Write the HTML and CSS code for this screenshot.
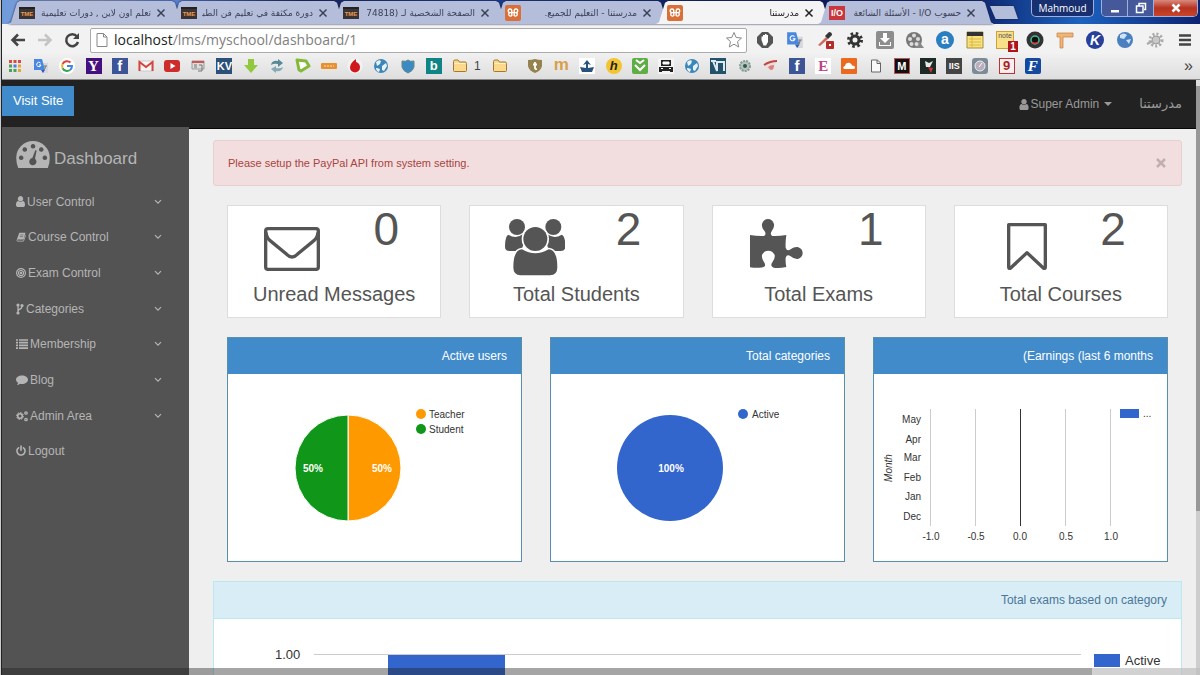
FILE: index.html
```html
<!DOCTYPE html>
<html lang="en">

<head>
    <meta charset="UTF-8">
    <meta name="viewport" content="width=device-width, initial-scale=1.0">
    <title>مدرستنا</title>
    <link rel="stylesheet" href="styles.css">
</head>
<body>
    <svg class="sprite" aria-hidden="true">
        <symbol id="close" viewBox="0 0 10 10"><path d="M1.5 1.5l7 7m0-7l-7 7" stroke="currentColor" stroke-width="1.5" fill="none"/></symbol>
        <symbol id="chevron" viewBox="0 0 8 6"><path d="M1 1.2l3 3 3-3" stroke="currentColor" stroke-width="1.2" fill="none"/></symbol>
        <symbol id="xampp" viewBox="0 0 16 16"><rect width="16" height="16" rx="2" fill="#d9703a"/><path d="M5 4a1.800 1.800 0 1 0 0 3.600h6a1.800 1.800 0 1 0-1.800-2v5a1.800 1.800 0 1 0 1.800-3H5a1.800 1.800 0 1 0 1.800 3v-5A1.800 1.800 0 0 0 5 4z" stroke="#fff" stroke-width="1.400" fill="none"/></symbol>
        <symbol id="user" viewBox="256 128 1280 1536"><path fill="currentColor" d="M1536 1399q0 109-62.5 187t-150.5 78h-854q-88 0-150.5-78t-62.5-187q0-85 8.5-160.5t31.5-152 58.5-131 94-89 134.5-34.5q131 128 313 128t313-128q76 0 134.5 34.5t94 89 58.5 131 31.5 152 8.5 160.5zm-256-887q0 159-112.5 271.5t-271.5 112.5-271.5-112.5-112.5-271.5 112.5-271.5 271.5-112.5 271.5 112.5 112.5 271.5z"/></symbol>
        <symbol id="folder" viewBox="0 0 16 16"><path d="M1.5 3.5q0-1.500 1.500-1.500h3l1.500 2h5.500q1.500 0 1.500 1.500v7q0 1-1 1h-11q-1 0-1-1z" fill="#fbd98c" stroke="#a8772c"/><path d="M2.500 5.500h11" stroke="#fff1c4"/></symbol>
        <symbol id="translate" viewBox="0 0 16 16"><path d="M6 5h9v10H9z" fill="#d5d8dc"/><path d="M1 1h8l3 11H1z" fill="#4a87e0"/><path d="M8 12h4l-2 3z" fill="#2c5fb5"/><path d="M7.500 5a2.200 2.200 0 1 0 .5 2H6" stroke="#fff" fill="none"/><path d="M11 8h3m-1.500 0q0 3-2 4" stroke="#777" fill="none"/></symbol>
        <symbol id="globe" viewBox="0 0 16 16"><circle cx="8" cy="8" r="7" fill="#3c86b8"/><path d="M3 4q3-3 5-1l-1 3-3 2zm6 4l4-3 1 3-3 5-2-1zM4 10l3 1-1 3q-3-1-3-4z" fill="#e6f2f6"/></symbol>
    </svg>

    <div class="window">
        <div class="tabstrip">
            <div class="tabs">
                <div class="tab"><span class="tme">TME</span><span class="title" dir="rtl">تعلم اون لاين , دورات تعليمية</span><button aria-label="Close tab"><svg><use href="#close"/></svg></button></div>
                <div class="tab"><span class="tme">TME</span><span class="title" dir="rtl">دورة مكثفة في تعليم فن الطبا</span><button aria-label="Close tab"><svg><use href="#close"/></svg></button></div>
                <div class="tab"><span class="tme">TME</span><span class="title" dir="rtl">الصفحة الشخصية لـ (74818</span><button aria-label="Close tab"><svg><use href="#close"/></svg></button></div>
                <div class="tab"><svg class="ico"><use href="#xampp"/></svg><span class="title" dir="rtl">مدرستنا - التعليم للجميع.</span><button aria-label="Close tab"><svg><use href="#close"/></svg></button></div>
                <div class="tab active"><svg class="ico"><use href="#xampp"/></svg><span class="title" dir="rtl">مدرستنا</span><button aria-label="Close tab"><svg><use href="#close"/></svg></button></div>
                <div class="tab"><span class="io">I/O</span><span class="title" dir="rtl">حسوب I/O - الأسئلة الشائعة</span><button aria-label="Close tab"><svg><use href="#close"/></svg></button></div>
                <button class="newtab" aria-label="New tab"></button>
            </div>
            <div class="controls">
                <button class="profile">Mahmoud</button>
                <div class="winbtns">
                    <button aria-label="Minimize"><svg viewBox="0 0 12 12"><path d="M2 8h8v2.500H2z" fill="#fff"/></svg></button>
                    <button aria-label="Restore"><svg viewBox="0 0 12 12"><path d="M4 3.500V1.500h6.500v6H9M1.500 4h6.500v6.500H1.500z" stroke="#fff" stroke-width="1.500" fill="none"/></svg></button>
                    <button class="exit" aria-label="Close"><svg viewBox="0 0 12 12"><path d="M2.500 2.500l7 7m0-7l-7 7" stroke="#fff" stroke-width="2.500"/></svg></button>
                </div>
            </div>
        </div>

        <div class="toolbar">
            <button aria-label="Back"><svg viewBox="0 0 18 18"><path d="M16 9H3m6-5.500L3.500 9 9 14.500" stroke="#444" stroke-width="2.500" fill="none"/></svg></button>
            <button aria-label="Forward"><svg viewBox="0 0 18 18"><path d="M2 9h13M9 3.500L14.500 9 9 14.500" stroke="#c4c4c4" stroke-width="2.500" fill="none"/></svg></button>
            <button aria-label="Reload"><svg viewBox="0 0 18 18"><path d="M14 5.500A6 6 0 1 0 15 11" stroke="#444" stroke-width="2.500" fill="none"/><path d="M16 2v6h-6z" fill="#444"/></svg></button>
            <div class="omnibox">
                <svg class="ico" viewBox="0 0 16 16"><path d="M3 1.500h6.500l3.500 3.500v9.500H3zM9.500 1.500V5H13" stroke="#888" fill="#fff"/></svg>
                <span class="url"><b>localhost</b>/lms/myschool/dashboard/1</span>
                <button aria-label="Bookmark this page"><svg viewBox="0 0 18 18"><path d="M9 1.500l2.200 5 5.300.5-4 3.600 1.200 5.400L9 13.200 4.300 16l1.200-5.400-4-3.600 5.300-.5z" stroke="#888" fill="#fff"/></svg></button>
            </div>
            <div class="extensions">
                <svg viewBox="0 0 18 18"><path d="M6 1h6l5 5v6l-5 5H6l-5-5V6z" fill="#555"/><path d="M5.500 9V5.500h1.500V4h2V3h1.500v1H12v7l-2 3.500H7.500z" fill="#fff"/></svg>
                <svg><use href="#translate"/></svg>
                <svg viewBox="0 0 18 18"><path d="M2 14l8-8 2 2-8 7z" fill="#c96a60"/><path d="M9 5l4-4q3 0 3 3l-4 4z" fill="#333"/><rect x="10" y="10" width="8" height="8" rx="1" fill="#b52c2a"/><path d="M13 13h2v2h-2z" fill="#fff"/></svg>
                <svg viewBox="0 0 18 18"><circle cx="9" cy="9" r="6.500" stroke="#333" stroke-width="3" stroke-dasharray="2.500 2.600" fill="none"/><circle cx="9" cy="9" r="4" stroke="#333" stroke-width="3" fill="none"/></svg>
                <svg viewBox="0 0 18 18"><rect width="18" height="18" rx="2" fill="#8d8d8d"/><path d="M7 2h4v5h3l-5 5-5-5h3zM3 11v4h12v-4h-1v3H4v-3z" fill="#fff"/></svg>
                <svg viewBox="0 0 18 18"><circle cx="8" cy="9" r="8" fill="#777"/><path d="M13 10l5 7h-9z" fill="#888"/><g fill="#ddd"><circle cx="8" cy="4.500" r="2"/><circle cx="4" cy="8" r="2"/><circle cx="12" cy="8" r="2"/><circle cx="5.500" cy="13" r="2"/><circle cx="10.500" cy="13" r="2"/></g></svg>
                <span class="badge round a">a</span>
                <svg viewBox="0 0 18 18"><path d="M1 1h16v16H1z" fill="#f7e27c" stroke="#a58f3a"/><path d="M1 1h16v4H1z" fill="#333"/><path d="M3 8h12M3 11h12M3 14h12M6 5v12" stroke="#d9b84a"/></svg>
                <span class="note">note<i>1</i></span>
                <svg viewBox="0 0 18 18"><circle cx="9" cy="9" r="8.500" fill="#333"/><circle cx="9" cy="9" r="4" fill="#111" stroke="#4b9" stroke-width="1.500"/><path d="M6 11a4 4 0 0 0 6 0" stroke="#d33" stroke-width="1.500" fill="none"/></svg>
                <svg viewBox="0 0 18 18"><path d="M1 2h16v4H7v11H4V6H1z" fill="#eeb478" stroke="#c9803a" stroke-width=".7"/></svg>
                <span class="badge round k">K</span>
                <svg viewBox="0 0 18 18"><circle cx="9" cy="9" r="8" fill="#4a7fc0"/><path d="M4 4q4-3 7 0l-3 4-4-1zM10 9l5-1-2 5z" fill="#cfe2f6"/></svg>
                <svg viewBox="0 0 18 18"><circle cx="10" cy="9" r="6" stroke="#aaa" stroke-width="3" stroke-dasharray="2 2" fill="none"/><circle cx="10" cy="9" r="4" fill="#c8c8c8" stroke="#999"/><path d="M1 13l6-3" stroke="#aaa" stroke-width="2"/></svg>
                <svg viewBox="0 0 18 18"><path d="M3 4.500h12M3 9h12M3 13.500h12" stroke="#444" stroke-width="2.500"/></svg>
            </div>
        </div>

        <div class="bookmarks">
            <div class="group">
                <svg viewBox="0 0 16 16"><path d="M2 3.500h3m1.500 0h3m1.500 0h3" stroke="#dc4a3d" stroke-width="3"/><path d="M2 8h3" stroke="#4aa350" stroke-width="3"/><path d="M6.500 8h3" stroke="#4383d8" stroke-width="3"/><path d="M11 8h3" stroke="#e8a33d" stroke-width="3"/><path d="M2 12.500h3m1.500 0h3" stroke="#4aa350" stroke-width="3"/><path d="M11 12.500h3" stroke="#e8a33d" stroke-width="3"/></svg>
                <svg><use href="#translate"/></svg>
                <svg viewBox="0 0 16 16"><circle cx="8" cy="8" r="8" fill="#fff"/><g fill="none" stroke-width="2"><path d="M11.500 4.500A5 5 0 0 0 3.600 6" stroke="#e0443a"/><path d="M3.600 6a5 5 0 0 0 0 4.200" stroke="#f0b428"/><path d="M3.600 10.200A5 5 0 0 0 11 12" stroke="#3aa555"/><path d="M11 12a5 5 0 0 0 2-4H8" stroke="#4285e4"/></g></svg>
                <span class="fav serif yahoo">Y</span>
                <span class="fav fb">f</span>
                <svg viewBox="0 0 16 16"><path d="M1 3h14v10H1z" fill="#f6f6f6" stroke="#ccc"/><path d="M1.500 13V4L8 9l6.500-5v9" stroke="#d6453d" stroke-width="2" fill="none"/></svg>
                <svg viewBox="0 0 16 16"><rect y="2" width="16" height="12" rx="3" fill="#cc2f2b"/><path d="M6.500 5v6l5-3z" fill="#fff"/></svg>
                <svg viewBox="0 0 16 16"><path d="M2 3h12v8H2z" fill="#ddd" stroke="#999"/><path d="M2 4h12" stroke="#c55" stroke-width="2"/><path d="M4 7h3m-3 2h3m2-2h3v6H8" stroke="#777" fill="none"/></svg>
                <span class="fav kv">KV</span>
                <svg viewBox="0 0 16 16"><path d="M5 1h6v6h4l-7 8-7-8h4z" fill="#92c83e"/></svg>
                <svg viewBox="0 0 16 16"><path d="M2 7q1-5 7-4V1l5 4-5 4V6Q5 5 2 7z" fill="#58899a"/><path d="M14 9q-1 5-7 4v2l-5-4 5-3v2q4 1 7-1z" fill="#88a9b4"/></svg>
                <svg viewBox="0 0 16 16"><path d="M2 2l9 1 3 5-8 5-2-1z" stroke="#85b93a" stroke-width="3" stroke-linejoin="round" fill="#fff"/></svg>
                <svg viewBox="0 0 16 16"><rect y="5" width="16" height="6" rx="1" fill="#e8902e"/><path d="M3 8h10" stroke="#ffe0b8" stroke-dasharray="2 1"/></svg>
                <svg viewBox="0 0 16 16"><circle cx="8" cy="8" r="7.500" fill="#f3f3f3"/><path d="M9 1q-6 4-6 8.500a5 5 0 0 0 10 0Q13 5 9 4z" fill="#d0181c"/></svg>
                <svg><use href="#globe"/></svg>
                <svg viewBox="0 0 16 16"><path d="M2 3q4 1 6-1 2 2 6 1v6q-1 4-6 6-5-2-6-6z" fill="#3b8ac4" stroke="#688"/></svg>
                <span class="fav bing">b</span>
                <svg><use href="#folder"/></svg>
            </div>
            <div class="folders"><span>1</span><svg><use href="#folder"/></svg></div>
            <div class="group">
                <svg viewBox="0 0 16 16"><path d="M1 2q4 0 7-1 3 1 7 1v6q-1 5-7 7-6-2-7-7z" fill="#95824f"/><path d="M8 4v6q0 1.500 2 1M6 6.500h4" stroke="#fff" stroke-width="1.800" fill="none"/></svg>
                <span class="fav m">m</span>
                <svg viewBox="0 0 16 16"><path d="M0 0h16v16H0z" fill="#fff"/><path d="M1 9l6 1V6l-3 1 4-5 4 5-3-1v4l6-1-2 5H3z" fill="#27527d"/></svg>
                <span class="fav h">h</span>
                <svg viewBox="0 0 16 16"><rect width="16" height="16" rx="2" fill="#5fae45"/><path d="M4 2l4 3 4-3M3 7l5 5 5-5" stroke="#fff" stroke-width="2" fill="none"/></svg>
                <svg viewBox="0 0 16 16"><path d="M0 0h16v16H0z" fill="#f4f4f4"/><path d="M3 2h10v6H3zM1 9h14v5h-3v-1H4v1H1z" fill="#222"/><path d="M5 4h6v2H5zM3 10.500h2m6 0h2" fill="#fff" stroke="#fff"/></svg>
                <svg><use href="#globe"/></svg>
                <svg viewBox="0 0 16 16"><path d="M0 0h16v16H0z" fill="#24526b"/><path d="M1 3h5M3 3l4 10V4h7v9" fill="none" stroke="#dce9ee" stroke-width="2"/></svg>
                <svg viewBox="0 0 16 16"><circle cx="8" cy="8" r="5" fill="#b5c6c0" stroke="#879a93" stroke-dasharray="2 1" stroke-width="2"/><circle cx="8" cy="8" r="2" fill="#37554e"/></svg>
                <svg viewBox="0 0 16 16"><path d="M1 8q6-5 14-5-3 1-3 4 0 6-5 6-2-3-6-5z" fill="#eadcdc"/><path d="M1 7q6-4 13-4" stroke="#c2443f" stroke-width="2" fill="none"/><path d="M5 9q2-2 6-2 0 5-3 5-1 0-3-3z" fill="#d98078"/></svg>
                <span class="fav fb">f</span>
                <span class="fav serif e">E</span>
                <svg viewBox="0 0 16 16"><rect width="16" height="16" rx="1" fill="#ec6a1e"/><path d="M3 11q-2-2 1-3 1-4 5-3 2 1 2 2.500 3 0 3 2 0 1.500-1.500 1.500z" fill="#fff"/></svg>
                <svg viewBox="0 0 16 16"><path d="M3.500 2h6l3 3v9h-9zM9 2v3.500h3.500" stroke="#666" fill="#f8f8f8"/></svg>
                <span class="fav md">M</span>
                <svg viewBox="0 0 16 16"><path d="M0 0h16v16H0z" fill="#1c2b24"/><path d="M5 3l4 2 4-2-3 6H6z" fill="#e9e9e9"/><path d="M8 9l5 1-2 5z" fill="#c33"/></svg>
                <span class="fav iis">IIS</span>
                <svg viewBox="0 0 16 16"><rect width="16" height="16" rx="3" fill="#7d8a98"/><circle cx="8" cy="8" r="5" fill="#b9aebc" stroke="#eee"/><path d="M7 9l3-4" stroke="#fff"/></svg>
                <span class="fav nine">9</span>
                <span class="fav serif tf">F</span>
            </div>
            <span class="more">»</span>
        </div>

        <div class="viewport">
            <div class="page">
                <header class="navbar">
                    <a class="visit" href="#">Visit Site</a>
                    <a class="account" href="#"><svg><use href="#user"/></svg>Super Admin<i class="caret"></i></a>
                    <a class="brand" href="#" dir="rtl">مدرستنا</a>
                </header>
                <div class="layout">
                    <nav class="sidebar">
                        <h1><svg viewBox="0 0 102 82"><path fill="currentColor" fill-rule="evenodd" d="M6 82Q0 68 0 51a51 51 0 0 1 102 0q0 17-6 31zM51 9a7 7 0 1 0 .1 0zM26 19a7 7 0 1 0 .1 0zM76 19a7 7 0 1 0 .1 0zM15 44a7 7 0 1 0 .1 0zM87 44a7 7 0 1 0 .1 0zM58 28l-9 24a11 11 0 1 0 8 2l5-25z"/></svg>Dashboard</h1>
                        <ul>
                            <li><a href="#"><svg class="person"><use href="#user"/></svg>User Control<svg class="chev"><use href="#chevron"/></svg></a></li>
                            <li><a href="#"><svg viewBox="0 0 12 12"><path d="M4 1h7.500L9 9H1z" fill="currentColor"/><path d="M1.500 9q-1 2 .5 2h7L11.500 4" stroke="currentColor" fill="none"/><path d="M5 3.500h4M4.500 5.500h4" stroke="#535353" stroke-width=".7"/></svg>Course Control<svg class="chev"><use href="#chevron"/></svg></a></li>
                            <li><a href="#"><svg viewBox="1 1 10 10"><g fill="none" stroke="currentColor" stroke-width="1.200"><circle cx="6" cy="6" r="4.400"/><circle cx="6" cy="6" r="2.500"/></g><circle cx="6" cy="6" r="1.200" fill="currentColor"/></svg>Exam Control<svg class="chev"><use href="#chevron"/></svg></a></li>
                            <li><a href="#"><svg class="slim" viewBox="0 0 8 12"><path d="M2 2v8M6 2.500Q6 5.500 4 6T2 9" stroke="currentColor" stroke-width="1.300" fill="none"/><g fill="currentColor"><circle cx="2" cy="2" r="1.600"/><circle cx="6" cy="2.500" r="1.600"/><circle cx="2" cy="10" r="1.600"/></g></svg>Categories<svg class="chev"><use href="#chevron"/></svg></a></li>
                            <li><a href="#"><svg class="wide" viewBox="0 0 12 12"><path d="M0 2h2m1 0h9M0 4.700h2m1 0h9M0 7.400h2m1 0h9M0 10.100h2m1 0h9" stroke="currentColor" stroke-width="1.700"/></svg>Membership<svg class="chev"><use href="#chevron"/></svg></a></li>
                            <li><a href="#"><svg class="wide" viewBox="0 0 12 12"><path d="M6 1.500c3.300 0 6 1.900 6 4.200S9.300 10 6 10q-1 0-2-.3-1.500 1.300-3 1.300 1-1 1-2.300Q0 7.500 0 5.700C0 3.400 2.700 1.500 6 1.500z" fill="currentColor"/></svg>Blog<svg class="chev"><use href="#chevron"/></svg></a></li>
                            <li><a href="#"><svg class="wide" viewBox="0 0 12 12"><g fill="none" stroke="currentColor"><circle cx="4" cy="6" r="2.300" stroke-width="1.600"/><circle cx="4" cy="6" r="3.500" stroke-dasharray="1.500 1.200"/><circle cx="10" cy="3" r="1.200" stroke-width="1.300"/><circle cx="10" cy="9.500" r="1.200" stroke-width="1.300"/></g></svg>Admin Area<svg class="chev"><use href="#chevron"/></svg></a></li>
                            <li><a href="#"><svg viewBox="100 0 1592 1792"><path fill="currentColor" d="M1664 896q0 156-61 298t-164 245-245 164-298 61-298-61-245-164-164-245-61-298q0-182 80.5-343t226.5-270q43-32 95.5-25t83.5 50q32 42 24.5 94.500t-49.500 84.500q-98 74-151.500 181t-53.500 228q0 104 40.500 198.500t109.500 163.500 163.500 109.500 198.500 40.500 198.500-40.500 163.500-109.500 109.500-163.500 40.500-198.500q0-121-53.500-228t-151.500-181q-42-32-49.500-84.500t24.500-94.500q31-43 84-50t95 25q146 109 226.500 270t80.500 343zm-640-768v640q0 52-38 90t-90 38-90-38-38-90v-640q0-52 38-90t90-38 90 38 38 90z"/></svg>Logout</a></li>
                        </ul>
                    </nav>

                    <main>
                        <div class="alert">Please setup the PayPal API from system setting.<button aria-label="Dismiss"><svg viewBox="0 0 12 12"><path d="M2 2l8 8m0-8l-8 8" stroke="currentColor" stroke-width="2.500"/></svg></button></div>

                        <div class="stats">
                            <div class="stat">
                                <svg viewBox="132 72 168 171"><rect x="137" y="101" width="158" height="122" rx="7" fill="none" stroke="#555" stroke-width="10"/><path d="M138 112q0 16 16 28l46 38q16 16 32 0l46-38q16-12 16-28" fill="none" stroke="#555" stroke-width="10"/></svg>
                                <strong>0</strong>
                                <p>Unread Messages</p>
                            </div>
                            <div class="stat">
                                <svg viewBox="846 72 180 171"><g fill="#555"><circle cx="882" cy="96" r="24"/><circle cx="991" cy="96" r="24"/><path d="M856 119q-10 4-10 36 0 13 14 13h34l14-36-9-14q-20 16-43 1zM1016 119q11 4 11 36 0 13-14 13h-34l-14-36 9-14q20 16 42 1z"/></g><path d="M897 163q-26 2-26 54 0 24 22 24h88q22 0 22-24 0-52-26-54-40 24-80 0z" fill="#555" stroke="#fff" stroke-width="10" paint-order="stroke"/><circle cx="937" cy="132" r="36" fill="#555" stroke="#fff" stroke-width="10" paint-order="stroke"/></svg>
                                <strong>2</strong>
                                <p>Total Students</p>
                            </div>
                            <div class="stat">
                                <svg viewBox="157 72 158 171"><path fill="#555" d="M157 120q22 4 42 3 8-4 2-14-10-12-8-22 5-15 18-15t18 15q2 10-7 22-6 10 2 14 20 1 42-3-3 20-2 38 4 12 15 5 10-8 21-7 15 5 15 18t-15 18q-11 1-21-8-11-8-15 4-1 15 2 28-20 4-38 2-12-4-4-16 9-12 7-22-6-13-19-13t-19 13q-2 10 6 21 8 12-3 16-18 3-39 0z"/></svg>
                                <strong>1</strong>
                                <p>Total Exams</p>
                            </div>
                            <div class="stat">
                                <svg viewBox="873 72 168 171"><path d="M926 89h110v126q0 8-6 4l-49-46-49 46q-6 4-6-4z" fill="none" stroke="#555" stroke-width="10" stroke-linejoin="round"/></svg>
                                <strong>2</strong>
                                <p>Total Courses</p>
                            </div>
                        </div>

                        <div class="charts">
                            <section class="panel">
                                <h2>Active users</h2>
                                <svg viewBox="0 0 293 187">
                                    <path d="M120 41a53 53 0 0 1 0 106z" fill="#ff9900" stroke="#fff"/>
                                    <path d="M120 41a53 53 0 0 0 0 106z" fill="#109618" stroke="#fff"/>
                                    <text class="pct" x="85" y="98">50%</text>
                                    <text class="pct" x="154" y="98">50%</text>
                                    <circle cx="193" cy="40" r="5" fill="#ff9900"/><text x="201" y="44">Teacher</text>
                                    <circle cx="193" cy="55" r="5" fill="#109618"/><text x="201" y="59">Student</text>
                                </svg>
                            </section>
                            <section class="panel">
                                <h2>Total categories</h2>
                                <svg viewBox="0 0 293 187">
                                    <circle cx="119" cy="94" r="53" fill="#3366cc"/>
                                    <text class="pct" x="120" y="98">100%</text>
                                    <circle cx="192" cy="40" r="5" fill="#3366cc"/><text x="201" y="44">Active</text>
                                </svg>
                            </section>
                            <section class="panel">
                                <h2>(Earnings (last 6 months</h2>
                                <svg viewBox="0 0 293 187">
                                    <path d="M56.500 35v117M101.500 35v117M191.500 35v117M236.500 35v117" stroke="#ccc"/>
                                    <path d="M146.500 35v117" stroke="#333"/>
                                    <g text-anchor="end"><text x="47" y="49">May</text><text x="47" y="69">Apr</text><text x="47" y="87">Mar</text><text x="47" y="107">Feb</text><text x="47" y="126">Jan</text><text x="47" y="146">Dec</text></g>
                                    <g text-anchor="middle"><text x="57" y="166">-1.0</text><text x="102" y="166">-0.5</text><text x="146" y="166">0.0</text><text x="192" y="166">0.5</text><text x="237" y="166">1.0</text></g>
                                    <text class="axis" transform="translate(18 94) rotate(-90)">Month</text>
                                    <path d="M246 35h19v9h-19z" fill="#3366cc"/><text x="269" y="43">...</text>
                                </svg>
                            </section>
                        </div>

                        <section class="panel info">
                            <h2>Total exams based on category</h2>
                            <svg viewBox="0 0 967 160">
                                <path d="M100 35.500h767" stroke="#ccc"/>
                                <path d="M174 36h117v124H174z" fill="#3366cc"/>
                                <text x="61" y="40">1.00</text>
                                <path d="M880 35h26v13h-26z" fill="#3366cc"/><text x="911" y="46">Active</text>
                            </svg>
                        </section>
                    </main>
                </div>
            </div>
            <div class="scroll-y"></div>
        </div>
        <div class="scroll-x"></div>
    </div>
</body>

</html>
```
FILE: styles.css
```css
*, *:before, *:after {box-sizing: border-box;}
* {margin: 0;padding: 0;}
html, body {height: 100%;overflow: hidden;}
body {background: #c9ccd0;color: #555;font: 12px/16px "Liberation Sans", Arial, sans-serif;padding-left: 1px;}
a {color: inherit;text-decoration: none;}
button {border: none;background: none;font: inherit;color: inherit;cursor: pointer;}
svg {display: block;flex: none;}
ul {list-style: none;}
.sprite {position: absolute;width: 0;height: 0;}
.window {position: relative;display: flex;flex-direction: column;height: 100%;border-left: 1px solid #222;overflow: hidden;}

/* browser chrome */
.tabstrip {display: flex;justify-content: space-between;height: 24px;padding-left: 6px;background: linear-gradient(90deg, #6f9bdc, #a3a0bd 8%, #5c86d8 14%, #16225a 25%, #1b3c8c 40%, #0c1c58 60%, #0c1c60 80%, #1c62c0 90%, #0d2270);}
.tabs {display: flex;align-items: flex-end;flex: 0 1 1010px;min-width: 0;filter: drop-shadow(0 0 1px #1a2348);}
.tab {display: flex;align-items: center;gap: 5px;flex: 0 1 176px;min-width: 0;height: 23px;padding: 0 18px 0 11px;margin-right: -14px;background: #b4bedb;color: #3b4156;clip-path: polygon(0 100%, 3px 92%, 9px 8%, 12px 0, 164px 0, 167px 8%, 173px 92%, 176px 100%);}
.tab.active {position: relative;background: #f4f4f4;color: #222;}
.tab .title {flex: 1;min-width: 0;overflow: hidden;white-space: nowrap;font: 9px/16px "DejaVu Sans", sans-serif;}
.tab button, .tab button svg {width: 10px;height: 10px;}
.ico {width: 16px;height: 16px;}
.tme {width: 16px;height: 12px;background: #3a3434;border-top: 2px solid #222;color: #ee9a4e;font-size: 6px;line-height: 10px;font-weight: bold;text-align: center;}
.io {width: 16px;height: 14px;background: #c8373b;color: #fff;font-size: 9px;line-height: 14px;font-weight: bold;text-align: center;}
.newtab {width: 28px;height: 13px;margin: 0 0 5px 10px;background: #b4bedb;clip-path: polygon(0 0, 84% 0, 100% 100%, 20% 100%);}
.controls {display: flex;gap: 7px;padding-right: 2px;}
.profile {width: 63px;height: 17px;border: 1px solid #9fb0dd;border-top: none;border-radius: 0 0 5px 5px;background: #18306f;color: #fff;font: 10px/14px "Open Sans", sans-serif;}
.winbtns {display: flex;height: 17px;border: 1px solid #9fb0dd;border-top: none;border-radius: 0 0 5px 5px;overflow: hidden;}
.winbtns button {display: flex;align-items: center;justify-content: center;width: 26px;background: #45599a;border-right: 1px solid #9fb0dd;}
.winbtns .exit {width: 43px;background: linear-gradient(#d88a7e, #b83220 50%, #c8452c);border: none;}
.winbtns svg {width: 12px;height: 12px;}
.toolbar {display: flex;align-items: center;height: 30px;padding: 2px 6px 0 7px;gap: 9px;background: #f2f2f2;}
.toolbar button, .toolbar button svg {width: 18px;height: 18px;}
.omnibox {display: flex;align-items: center;gap: 4px;flex: 1;min-width: 0;height: 25px;padding: 0 3px;background: #fff;border: 1px solid #aaa;border-radius: 2px;}
.url {flex: 1;min-width: 0;overflow: hidden;white-space: nowrap;font: 14px/22px "Open Sans", sans-serif;color: #808080;}
.url b {font-weight: normal;color: #222;}
.extensions {display: flex;align-items: center;gap: 12px;}
.extensions svg {width: 18px;height: 18px;}
.badge {width: 18px;height: 18px;border-radius: 50%;color: #fff;font-size: 14px;line-height: 18px;font-weight: bold;text-align: center;}
.badge.a {background: #2a7fc1;line-height: 16px;}
.badge.k {background: #27409a;font-style: italic;}
.note {position: relative;width: 18px;height: 18px;background: #f8e08a;border: 1px solid #d0a030;font-size: 7px;line-height: 8px;text-align: center;}
.note i {position: absolute;right: -5px;bottom: -4px;width: 10px;height: 11px;background: #b0141c;color: #fff;font: bold 10px/11px "Liberation Sans", sans-serif;}
.bookmarks {display: grid;grid-template-columns: 461fr 59fr 514fr 159fr;align-items: center;height: 26px;padding: 0 0 2px 5px;background: linear-gradient(#f0f0f0, #dedede);border-bottom: 1px solid #888;}
.group {display: flex;justify-content: space-between;}
.bookmarks svg, .fav {width: 16px;height: 16px;}
.folders {display: flex;gap: 11px;padding-left: 6px;color: #444;}
.more {justify-self: end;padding-right: 7px;font-size: 16px;color: #444;}
.fav {color: #fff;font-size: 13px;line-height: 16px;font-weight: bold;text-align: center;}
.serif {font-family: "Liberation Serif", serif;font-size: 15px;}
.yahoo {background: #45107e;}
.fb {background: #3b5596;font-size: 15px;}
.kv {background: #2c5078;font-size: 11px;}
.bing {background: #0f8484;}
.m {color: #d6a04a;font-size: 17px;line-height: 14px;}
.h {background: #f2c531;color: #222;border-radius: 50%;font-style: italic;}
.e {background: #fff;color: #bb4386;}
.md {background: #111;border: 1px solid #b55;font-size: 11px;line-height: 14px;}
.iis {background: #444;font-size: 9px;}
.nine {background: #fbeeee;border: 1px solid #b33;color: #a22;line-height: 14px;}
.tf {background: #144a9e;border-radius: 2px;font-style: italic;}

/* page */
.viewport {display: flex;flex: 1;min-height: 0;}
.page {display: flex;flex-direction: column;flex: 1;min-width: 0;overflow: hidden;background: #efefef;}
.navbar {display: flex;align-items: center;flex: none;height: 49px;padding-right: 14px;background: #222;border-bottom: 1px solid #080808;color: #999;}
.visit {align-self: flex-start;margin: 6px auto 0 0;padding: 7px 11px;background: #428bca;color: #fff;font-size: 13px;}
.account {display: flex;align-items: center;}
.account svg {width: 10px;height: 11px;margin-right: 2px;}
.caret {margin-left: 5px;border: 4px solid transparent;border-top-color: #999;border-bottom: none;}
.brand {margin-left: 27px;font: 13px/20px "DejaVu Sans", sans-serif;}
.layout {display: flex;flex: 1;min-height: 0;}
.sidebar {flex: none;width: 187px;margin-top: -2px;padding: 14px 14px 0;background: #535353;color: #b5b5b5;}
.sidebar h1 {display: flex;align-items: flex-end;gap: 4px;height: 27px;font-size: 17px;line-height: 18px;font-weight: normal;}
.sidebar h1 svg {width: 34px;height: 27px;}
.sidebar ul {display: grid;grid-auto-rows: 1fr;min-height: 285px;margin-top: 16px;}
.sidebar a {display: flex;align-items: center;gap: 2px;height: 100%;}
.sidebar a svg {width: 10px;height: 12px;}
.sidebar a .person {width: 9px;height: 11px;}
.sidebar a .slim {width: 8px;}
.sidebar a .wide {width: 12px;}
.sidebar a .chev {width: 8px;height: 6px;margin: 0 13px 0 auto;}
main {flex: 1;min-width: 0;padding: 11px 14px 0 24px;}
.alert {display: flex;align-items: center;justify-content: space-between;padding: 14px;background: #f2dede;border: 1px solid #e8d0d2;border-radius: 3px;color: #a94442;font-size: 11px;}
.alert button {width: 12px;height: 12px;color: #c3aeae;}
.alert svg {width: 12px;height: 12px;}
.stats, .charts {display: grid;grid-template-columns: repeat(4, 1fr);gap: 28px;margin: 19px 14px 0;}
.charts {grid-template-columns: repeat(3, 1fr);}
.stat {display: grid;grid-template-columns: 5fr 4fr;padding: 0 12px 11px;background: #fff;border: 1px solid #ddd;text-align: center;}
.stat svg {height: 57px;margin: 13px auto 0;}
.stat strong {font-size: 46px;line-height: 46px;font-weight: normal;}
.stat p {grid-column: 1 / 3;margin-top: 6px;font-size: 20px;line-height: 24px;}
.panel {background: #fff;border: 1px solid #428bca;}
.charts .panel {border-color: #5a8fa8;}
.panel h2 {padding: 10px 14px;background: #428bca;color: #fff;font-size: 12px;line-height: 16px;font-weight: normal;text-align: right;}
.panel svg {width: 100%;}
.panel text {font-size: 10px;fill: #333;}
.panel .pct {fill: #fff;font-weight: bold;text-anchor: middle;}
.panel .axis {font-style: italic;text-anchor: middle;}
.info {margin-top: 19px;border-color: #bce8f1;}
.info h2 {background: #d9edf7;color: #4a7796;border-bottom: 1px solid #bce8f1;}
.info text {font-size: 13px;}
.scroll-y {width: 4px;background: linear-gradient(#ddd 6px, #989898 6px, #989898 431px, #cdcdcd 431px);}
.scroll-x {position: absolute;left: 0;right: 0;bottom: 0;height: 7px;background: linear-gradient(90deg, rgba(30, 30, 30, .4) 91%, rgba(190, 190, 190, .7) 91%);}
```
